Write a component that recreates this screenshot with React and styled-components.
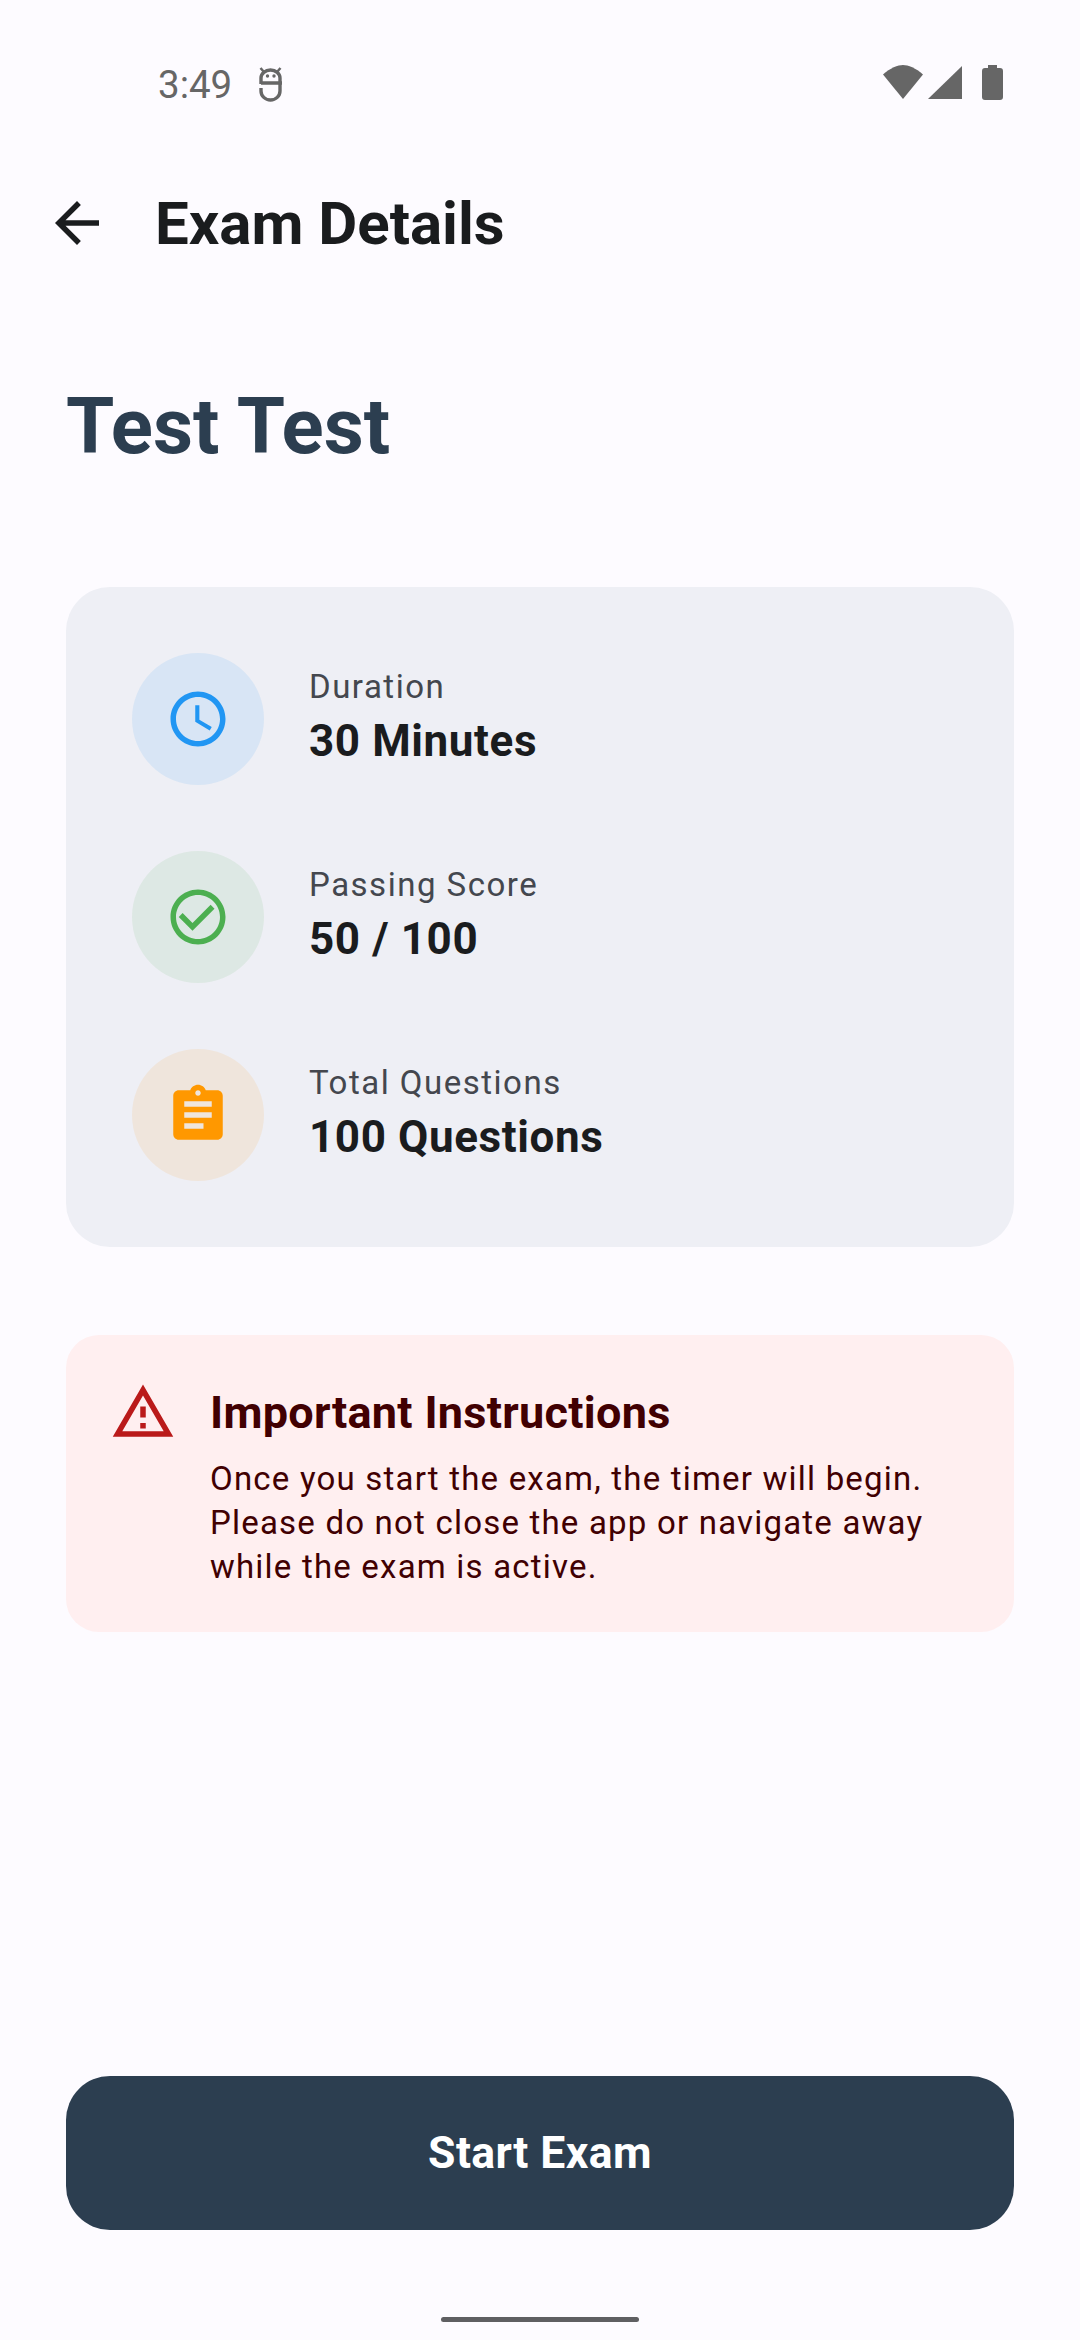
import React from 'react'
import styled, { createGlobalStyle } from 'styled-components'

const GlobalStyle = createGlobalStyle`
  html, body { margin: 0; padding: 0; background: #fdfbff; }
  * { box-sizing: border-box; }
`

const Page = styled.div`
  width: 1080px;
  height: 2340px;
  display: flex;
  flex-direction: column;
  background: #fdfbff;
  font-family: Roboto, "Liberation Sans", sans-serif;
  color: #1a1c1e;
`

const StatusBar = styled.div`
  height: 135px;
  padding: 0 36px 0 158px;
  display: flex;
  justify-content: space-between;
  align-items: flex-start;
  color: #666;
`

const StatusLeft = styled.div`
  display: flex;
  align-items: center;
  gap: 26px;
  height: 40px;
  margin-top: 64px;
  font-size: 38.5px;
`

const StatusRight = styled.div`
  display: flex;
  align-items: center;
  margin-top: 64px;
`

const AppBar = styled.div`
  height: 176px;
  display: flex;
  align-items: center;
  padding-left: 11px;
`

const BackButton = styled.button`
  width: 132px;
  height: 132px;
  border: 0;
  padding: 0;
  background: none;
  display: flex;
  align-items: center;
  justify-content: center;
  color: #1a1c1e;
`

const AppTitle = styled.h1`
  margin: 0 0 0 12px;
  font-size: 60px;
  font-weight: 700;
`

const Content = styled.div`
  flex: 1;
  display: flex;
  flex-direction: column;
  padding: 0 66px;
`

const ExamName = styled.h2`
  margin: 61px 0 105px;
  font-size: 78px;
  line-height: 110px;
  font-weight: 700;
  color: #2c3e50;
`

const InfoCard = styled.div`
  display: flex;
  flex-direction: column;
  gap: 66px;
  padding: 66px;
  background: #eeeff5;
  border-radius: 44px;
`

const InfoRow = styled.div`
  display: flex;
  align-items: center;
  gap: 45px;
`

const IconCircle = styled.div`
  width: 132px;
  height: 132px;
  border-radius: 50%;
  display: flex;
  align-items: center;
  justify-content: center;
  background: ${p => p.$color}1a;
  color: ${p => p.$color};
`

const InfoText = styled.div`
  padding-bottom: 4px;
`

const InfoLabel = styled.div`
  font-size: 33px;
  line-height: 44px;
  letter-spacing: 1.5px;
  font-weight: 450;
  color: #44474e;
`

const InfoValue = styled.div`
  margin-top: 5px;
  font-size: 44px;
  line-height: 55px;
  font-weight: 700;
  letter-spacing: 0.6px;
`

const Notice = styled.div`
  margin-top: 88px;
  display: flex;
  gap: 40px;
  padding: 50px 44px 43px 44px;
  background: #ffeff0;
  border-radius: 33px;
  color: #410002;
`

const NoticeIcon = styled.div`
  flex: none;
  width: 60px;
  height: 60px;
  margin-top: -6px;
  color: #ba1a1a;
`

const NoticeTitle = styled.div`
  font-size: 45px;
  line-height: 55px;
  font-weight: 700;
  letter-spacing: 0.3px;
`

const NoticeText = styled.p`
  margin: 17px 0 0;
  font-size: 33px;
  line-height: 44px;
  letter-spacing: 1.2px;
`

const StartButton = styled.button`
  margin-top: auto;
  height: 154px;
  border: 0;
  border-radius: 44px;
  background: #2c3e50;
  color: #fff;
  font-family: inherit;
  font-size: 44.5px;
  font-weight: 700;
  letter-spacing: 0.4px;
`

const GestureArea = styled.div`
  height: 110px;
  display: flex;
  justify-content: center;
  align-items: flex-end;
  padding-bottom: 18px;
`

const GestureBar = styled.div`
  width: 198px;
  height: 5px;
  border-radius: 3px;
  background: #5f5f62;
`

const Icon = ({ d, size = 66 }) => (
  <svg width={size} height={size} viewBox="0 0 24 24" fill="currentColor"><path d={d} /></svg>
)

const clock = 'M11.99 2C6.47 2 2 6.48 2 12s4.47 10 9.99 10C17.52 22 22 17.52 22 12S17.52 2 11.99 2zM12 20c-4.42 0-8-3.58-8-8s3.58-8 8-8 8 3.58 8 8-3.58 8-8 8zm.5-13H11v6l5.25 3.15.75-1.23-4.5-2.67z'
const check = 'M16.59 7.58L10 14.17l-3.59-3.58L5 12l5 5 8-8zM12 2C6.48 2 2 6.48 2 12s4.48 10 10 10 10-4.48 10-10S17.52 2 12 2zm0 18c-4.42 0-8-3.58-8-8s3.58-8 8-8 8 3.58 8 8-3.58 8-8 8z'
const assignment = 'M19 3h-4.18C14.4 1.84 13.3 1 12 1c-1.3 0-2.4.84-2.82 2H5c-1.1 0-2 .9-2 2v14c0 1.1.9 2 2 2h14c1.1 0 2-.9 2-2V5c0-1.1-.9-2-2-2zm-7 0c.55 0 1 .45 1 1s-.45 1-1 1-1-.45-1-1 .45-1 1-1zm2 14H7v-2h7v2zm3-4H7v-2h10v2zm0-4H7V7h10v2z'
const warning = 'M12 5.99L19.53 19H4.47L12 5.99M12 2L1 21h22L12 2zm1 14h-2v2h2v-2zm0-6h-2v4h2v-4z'
const back = 'M20 11H7.830l5.590-5.590L12 4l-8 8 8 8 1.410-1.410L7.830 13H20v-2z'

const rows = [
  { icon: clock, color: '#2196f3', label: 'Duration', value: '30 Minutes' },
  { icon: check, color: '#4caf50', label: 'Passing Score', value: '50 / 100' },
  { icon: assignment, color: '#ff9800', label: 'Total Questions', value: '100 Questions' },
]

const App = () => (
  <Page>
    <GlobalStyle />
    <StatusBar>
      <StatusLeft>
        3:49
        <svg width="26" height="36" viewBox="0 0 26 36" fill="none" stroke="currentColor" strokeWidth="3.4">
          <path d="M3 18V12a9.500 8 0 0 1 19 0v5M3 17h21M22 17v8a9.500 9 0 0 1-19 0v-3" />
          <path d="M2.500 2l3.500 4M22.500 2l-3.500 4" strokeWidth="2.500" />
          <circle cx="9.500" cy="10" r="1.700" fill="currentColor" stroke="none" />
          <circle cx="16" cy="10" r="1.700" fill="currentColor" stroke="none" />
        </svg>
      </StatusLeft>
      <StatusRight>
        <svg width="164" height="40" viewBox="0 0 164 40" fill="currentColor">
          <path d="M3 10.500C10 4 18 1 23 1S36 4 43 10.500L23 35z" />
          <path d="M48 35L82 2V35z" />
          <path d="M102 7a3 3 0 0 1 3-3h3V1h9v3h3a3 3 0 0 1 3 3v26a3 3 0 0 1-3 3h-15a3 3 0 0 1-3-3z" />
        </svg>
      </StatusRight>
    </StatusBar>
    <AppBar>
      <BackButton><Icon d={back} /></BackButton>
      <AppTitle>Exam Details</AppTitle>
    </AppBar>
    <Content>
      <ExamName>Test Test</ExamName>
      <InfoCard>
        {rows.map(r => (
          <InfoRow key={r.label}>
            <IconCircle $color={r.color}><Icon d={r.icon} /></IconCircle>
            <InfoText>
              <InfoLabel>{r.label}</InfoLabel>
              <InfoValue>{r.value}</InfoValue>
            </InfoText>
          </InfoRow>
        ))}
      </InfoCard>
      <Notice>
        <NoticeIcon><Icon d={warning} size={66} /></NoticeIcon>
        <div>
          <NoticeTitle>Important Instructions</NoticeTitle>
          <NoticeText>
            Once you start the exam, the timer will begin.<br />
            Please do not close the app or navigate away<br />
            while the exam is active.
          </NoticeText>
        </div>
      </Notice>
      <StartButton>Start Exam</StartButton>
    </Content>
    <GestureArea><GestureBar /></GestureArea>
  </Page>
)

export default App
